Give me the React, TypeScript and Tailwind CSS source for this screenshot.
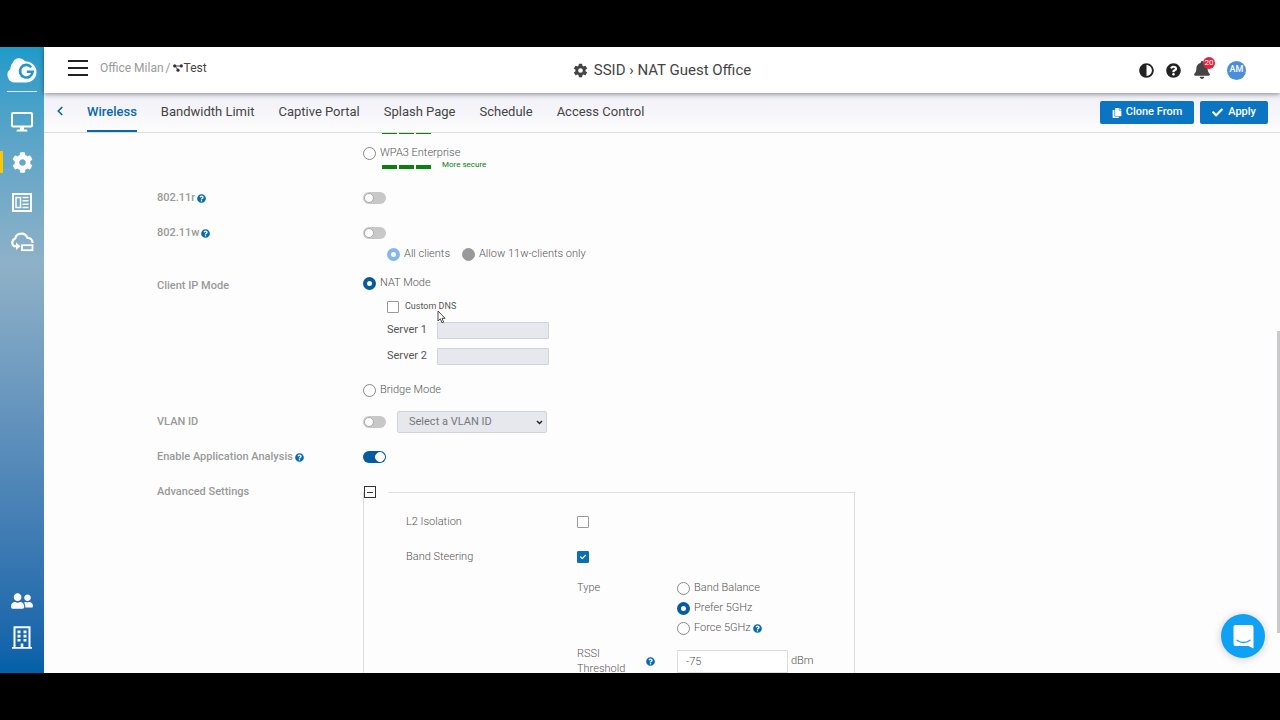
import { useState } from 'react';
import type { ReactNode } from 'react';
import { FaAdjust, FaBell, FaCheck, FaCog, FaCopy, FaQuestionCircle, FaUserFriends } from 'react-icons/fa';
import { IoSettingsSharp } from 'react-icons/io5';
import { ChevronLeft } from 'lucide-react';

const tabs = ['Wireless', 'Bandwidth Limit', 'Captive Portal', 'Splash Page', 'Schedule', 'Access Control'];

function CloudLogo() {
  return (
    <svg width="30" height="26" viewBox="0 0 30 26" aria-hidden="true">
      <path
        d="M8 25.500a7.500 7.500 0 0 1-4.600-13.400A7.300 7.300 0 0 1 5.600 6 7 7 0 0 1 18 4.200 11 11 0 0 1 29.500 15c0 6-4.500 10.500-10.500 10.500z"
        fill="#fff"
      />
      <path d="M24.200 10.200a6.300 6.300 0 1 0 1.400 4.600h-5.800" fill="none" stroke="#2596c6" strokeWidth="2.600" />
    </svg>
  );
}

function MonitorIcon() {
  return (
    <svg width="22" height="20" viewBox="0 0 22 20" fill="none" aria-hidden="true">
      <rect x="1" y="1" width="20" height="13.500" rx="1" stroke="#fff" strokeWidth="2" />
      <path d="M9 15h4v2.600h2.500q1 0 1 1.800h-11q0-1.800 1-1.800H9z" fill="#fff" />
    </svg>
  );
}

function ReportIcon() {
  return (
    <svg width="20" height="19" viewBox="0 0 20 19" fill="none" stroke="#fff" aria-hidden="true">
      <rect x="1" y="1" width="18" height="17" strokeWidth="2" />
      <rect x="4" y="4.500" width="4.500" height="10" strokeWidth="1.500" />
      <path d="M10.500 4.500h6M10.500 7.800h6M10.500 11.200h6M10.500 14.500h6" strokeWidth="1.500" />
    </svg>
  );
}

function CloudDeviceIcon() {
  return (
    <svg width="23" height="20" viewBox="0 0 23 20" fill="none" stroke="#fff" aria-hidden="true">
      <path d="M3 14.300A4.600 4.600 0 0 1 4.200 6.400 6.400 6.400 0 0 1 16.400 5.800 4.800 4.800 0 0 1 21.500 11" strokeWidth="2.200" />
      <path d="M2.500 14.200h3" strokeWidth="2.200" />
      <path d="M5 10.500l4.500 3.800L5 18z" fill="#fff" stroke="none" />
      <rect x="11" y="13.200" width="10.500" height="5" strokeWidth="1.800" />
    </svg>
  );
}

function OfficeIcon() {
  return (
    <svg width="20" height="23" viewBox="0 0 20 23" aria-hidden="true">
      <path d="M2.500 21V1.200h15V21" fill="none" stroke="#fff" strokeWidth="2" />
      <path d="M0 21h8.700v-3.500h2.600V21H20v1.800H0z" fill="#fff" />
      <path
        d="M5.500 4.500h3v2.700h-3zM11.500 4.500h3v2.700h-3zM5.500 8.700h3v2.700h-3zM11.500 8.700h3v2.700h-3zM5.500 12.900h3v2.700h-3zM11.500 12.900h3v2.700h-3z"
        fill="#fff"
      />
    </svg>
  );
}

function NetworkIcon() {
  return (
    <svg width="10" height="8" viewBox="0 0 10 8" aria-hidden="true">
      <path d="M2 2h6M2 2l3 4" stroke="#333" strokeWidth=".9" />
      <circle cx="1.700" cy="1.900" r="1.600" fill="#333" />
      <circle cx="8.300" cy="1.900" r="1.600" fill="#333" />
      <circle cx="5" cy="6.200" r="1.600" fill="#333" />
    </svg>
  );
}

function Help() {
  return <FaQuestionCircle size={9} className="shrink-0 text-[#0668b0]" title="Help" />;
}

function Strength() {
  return (
    <span className="flex gap-px">
      <span className="h-1 w-4 border-r border-[#fdfdfd] bg-[#0a800f]" />
      <span className="h-1 w-4 border-r border-[#fdfdfd] bg-[#0a800f]" />
      <span className="h-1 w-[15px] bg-[#0a800f]" />
    </span>
  );
}

type RadioProps = { name: string; label: string; defaultChecked?: boolean; disabled?: boolean };

function Radio({ name, label, defaultChecked, disabled }: RadioProps) {
  return (
    <label className="flex h-4 items-center gap-1 text-[#555]">
      <input
        type="radio"
        name={name}
        defaultChecked={defaultChecked}
        disabled={disabled}
        className="size-[13px] shrink-0 appearance-none rounded-full border border-[#888] bg-white checked:border-4 checked:border-[#065a9e] disabled:border-[#999] disabled:bg-[#999] disabled:checked:border-[#85b7ec] disabled:checked:bg-white"
      />
      {label}
    </label>
  );
}

function Check({ label, defaultChecked }: { label: string; defaultChecked?: boolean }) {
  return (
    <span className="grid size-3 shrink-0 place-items-center">
      <input
        type="checkbox"
        aria-label={label}
        defaultChecked={defaultChecked}
        className="peer col-start-1 row-start-1 size-3 appearance-none rounded-[1px] border border-[#999] bg-white checked:border-[#0b6fb8] checked:bg-[#0b6fb8]"
      />
      <FaCheck size={6} className="pointer-events-none col-start-1 row-start-1 hidden text-white peer-checked:block" />
    </span>
  );
}

function Toggle({ label, defaultChecked }: { label: string; defaultChecked?: boolean }) {
  return (
    <input
      type="checkbox"
      role="switch"
      aria-label={label}
      defaultChecked={defaultChecked}
      className="flex h-3 w-[23px] shrink-0 appearance-none items-center rounded-full bg-[#c8c8c8] px-px before:size-[10px] before:rounded-full before:border before:border-[#aaa] before:bg-white checked:justify-end checked:bg-[#065a9e] checked:before:border-white"
    />
  );
}

function Row({ label, help, className, children }: { label?: string; help?: boolean; className: string; children: ReactNode }) {
  return (
    <div className={`flex items-start ${className}`}>
      <div className="flex h-4 w-[206px] shrink-0 items-center gap-[2px] font-medium text-[#999]">
        {label}
        {help && <Help />}
      </div>
      <div className="min-w-0 flex-1">{children}</div>
    </div>
  );
}

function Sidebar() {
  return (
    <aside className="flex w-11 shrink-0 flex-col items-center bg-linear-to-b from-[#1b9bc9] via-[#8fb1c7] via-35% to-[#0360a8] pb-6 pt-[10px]">
      <a href="#home" aria-label="Home" className="flex h-[35px] w-[30px] flex-col justify-between border-b border-white/80">
        <CloudLogo />
      </a>
      <nav className="flex w-full flex-1 flex-col items-center pt-[10px]">
        <a href="#dashboard" aria-label="Dashboard" className="grid h-10 place-items-center"><MonitorIcon /></a>
        <a href="#configure" aria-label="Configure" className="grid h-10 w-full grid-cols-[3px_1fr_3px] items-center justify-items-center">
          <span className="h-[22px] w-[3px] bg-[#fdc800]" />
          <FaCog size={21} className="text-white" />
        </a>
        <a href="#reports" aria-label="Reports" className="grid h-10 place-items-center"><ReportIcon /></a>
        <a href="#devices" aria-label="Devices" className="grid h-10 place-items-center"><CloudDeviceIcon /></a>
        <a href="#users" aria-label="Users" className="mt-auto grid h-8 place-items-center"><FaUserFriends size={22} className="text-white" /></a>
        <a href="#organization" aria-label="Organization" className="grid h-8 place-items-end"><OfficeIcon /></a>
      </nav>
    </aside>
  );
}

function Header() {
  return (
    <header className="z-10 grid h-[46px] shrink-0 grid-cols-[1fr_auto_1fr] items-center bg-white px-6 shadow-[0_1px_5px_rgba(0,0,0,0.45)]">
      <div className="flex items-center gap-3 pb-1">
        <button aria-label="Menu" className="flex w-5 flex-col gap-[5px]">
          <span className="h-[2px] bg-[#222]" />
          <span className="h-[2px] bg-[#222]" />
          <span className="h-[2px] bg-[#222]" />
        </button>
        <div className="flex items-center gap-[2px] text-xs text-[#999]">
          <a href="#office">Office Milan</a>
          <span>/</span>
          <a href="#test" className="flex items-center gap-px text-[#444]"><NetworkIcon />Test</a>
        </div>
      </div>
      <h1 className="flex items-center gap-[6px] text-[15px] text-[#444]">
        <IoSettingsSharp size={15} />
        SSID › NAT Guest Office
      </h1>
      <div className="flex items-center justify-end gap-3 pr-[10px] text-[#222]">
        <button aria-label="Contrast"><FaAdjust size={15} /></button>
        <button aria-label="Help"><FaQuestionCircle size={15} /></button>
        <button aria-label="Notifications" className="relative">
          <FaBell size={18} className="text-[#444]" />
          <span className="absolute -right-1 -top-1 grid size-3 place-items-center rounded-full bg-[#e8213c] text-[8px] leading-none text-white">20</span>
        </button>
        <button className="ml-1 grid size-[19px] place-items-center rounded-full bg-[#4a8fdb] text-[9px] font-medium text-white">AM</button>
      </div>
    </header>
  );
}

function TabBar() {
  const [active, setActive] = useState('Wireless');
  return (
    <div className="flex h-10 shrink-0 items-stretch border-b border-[#ddd] bg-linear-to-b from-[#efeff7] to-[#fdfdfd] pl-[9px] pr-3">
      <button aria-label="Back" className="mr-5 pb-1 text-[#0668b0]"><ChevronLeft size={14} strokeWidth={3} /></button>
      <nav className="flex flex-1 gap-6">
        {tabs.map((tab) => (
          <button
            key={tab}
            onClick={() => setActive(tab)}
            className={tab === active ? 'border-b-2 border-[#0668b0] text-[13px] font-medium text-[#0668b0]' : 'border-b-2 border-transparent text-[13px] text-[#444]'}
          >
            {tab}
          </button>
        ))}
      </nav>
      <div className="flex items-center gap-[6px] text-[11px] font-medium text-white">
        <button className="flex h-[23px] items-center gap-1 rounded-[2px] bg-[#0b75c2] px-3"><FaCopy size={10} />Clone From</button>
        <button className="flex h-[23px] items-center gap-[5px] rounded-[2px] bg-[#0b75c2] px-3"><FaCheck size={11} />Apply</button>
      </div>
    </div>
  );
}

function AdvancedSettings() {
  return (
    <fieldset className="w-full max-w-[492px] border border-[#ddd] pl-[42px] text-[#555]">
      <legend className="-ml-[42px] pr-3">
        <button type="button" aria-label="Collapse" className="grid size-3 place-items-center border border-[#333] bg-white">
          <span className="h-px w-[6px] bg-[#333]" />
        </button>
      </legend>
      <div className="mt-4 flex h-4 items-center">
        <span className="w-[171px]">L2 Isolation</span>
        <Check label="L2 Isolation" />
      </div>
      <div className="mt-[19px] flex h-4 items-center">
        <span className="w-[171px]">Band Steering</span>
        <Check label="Band Steering" defaultChecked />
      </div>
      <div className="ml-[171px] mt-[15px] flex">
        <span className="w-[100px] leading-4">Type</span>
        <div className="flex flex-col gap-1">
          <Radio name="steering" label="Band Balance" />
          <Radio name="steering" label="Prefer 5GHz" defaultChecked />
          <span className="flex items-center gap-[2px]"><Radio name="steering" label="Force 5GHz" /><Help /></span>
        </div>
      </div>
      <div className="ml-[171px] mt-[10px] flex">
        <label htmlFor="rssi" className="w-[69px] leading-[15px]">RSSI<br />Threshold</label>
        <span className="flex h-[30px] w-[31px] shrink-0 items-center"><Help /></span>
        <span className="flex items-center gap-[3px] self-start pt-1">
          <input id="rssi" type="text" defaultValue="-75" className="h-[23px] w-[111px] border border-[#ddd] bg-white px-2" />
          dBm
        </span>
      </div>
    </fieldset>
  );
}

function WirelessForm() {
  return (
    <form className="min-h-0 flex-1 overflow-hidden pl-[113px] text-[11px] font-light">
      <Row className="-mt-[3px]">
        <div className="pl-[19px]"><Strength /></div>
        <div className="mt-[11px]"><Radio name="security" label="WPA3 Enterprise" /></div>
        <div className="flex items-end gap-[11px] pl-[19px]">
          <Strength />
          <span className="h-2 text-[8px] font-normal leading-[8px] text-[#0a800f]">More secure</span>
        </div>
      </Row>
      <Row label="802.11r" help className="mt-[21px]">
        <div className="flex h-4 items-center"><Toggle label="802.11r" /></div>
      </Row>
      <Row label="802.11w" help className="mt-[19px]">
        <div className="flex h-4 items-center"><Toggle label="802.11w" /></div>
        <div className="mt-[5px] flex gap-3 pl-6">
          <Radio name="pmf" label="All clients" defaultChecked disabled />
          <Radio name="pmf" label="Allow 11w-clients only" disabled />
        </div>
      </Row>
      <div className="mt-[13px] flex items-start">
        <div className="w-[206px] shrink-0 pt-[3px] font-medium leading-4 text-[#999]">Client IP Mode</div>
        <div className="min-w-0 flex-1">
          <Radio name="ipmode" label="NAT Mode" defaultChecked />
          <div className="flex flex-col pl-6 pt-2 font-normal text-[#555]">
            <div className="relative flex h-4 items-center gap-[6px] text-[9px]">
              <Check label="Custom DNS" />
              Custom DNS
              <svg className="absolute left-[50px] top-[11px]" width="9" height="14" viewBox="0 0 9 14" aria-hidden="true">
                <path d="M1 1v10l2.300-2.200L5 12.800l1.600-.700L5 8.300h3z" fill="#fff" stroke="#333" strokeWidth=".9" />
              </svg>
            </div>
            <label className="mt-[7px] flex items-center">
              <span className="w-[50px]">Server 1</span>
              <input type="text" disabled className="h-[17px] w-28 rounded-[1px] border border-[#d0d3d8] bg-[#e6e8ed] px-1" />
            </label>
            <label className="mt-[9px] flex items-center">
              <span className="w-[50px]">Server 2</span>
              <input type="text" disabled className="h-[17px] w-28 rounded-[1px] border border-[#d0d3d8] bg-[#e6e8ed] px-1" />
            </label>
          </div>
          <div className="mt-[17px]"><Radio name="ipmode" label="Bridge Mode" /></div>
        </div>
      </div>
      <Row label="VLAN ID" className="mt-4">
        <div className="flex h-4 items-center gap-[11px]">
          <Toggle label="VLAN ID" />
          <span className="grid items-center">
            <select aria-label="VLAN ID" disabled className="col-start-1 row-start-1 h-[22px] w-[150px] appearance-none rounded-[2px] border border-[#d0d3d8] bg-[#e6e8ed] px-[11px] font-normal text-[#777]">
              <option>Select a VLAN ID</option>
            </select>
            <svg className="col-start-1 row-start-1 mr-1 justify-self-end" width="7" height="5" viewBox="0 0 7 5" fill="none" aria-hidden="true">
              <path d="M1 1l2.500 2.500L6 1" stroke="#222" strokeWidth="1.500" />
            </svg>
          </span>
        </div>
      </Row>
      <Row label="Enable Application Analysis" help className="mt-[19px]">
        <div className="flex h-4 items-center"><Toggle label="Enable Application Analysis" defaultChecked /></div>
      </Row>
      <Row label="Advanced Settings" className="mt-[19px]">
        <div className="pt-[2px]"><AdvancedSettings /></div>
      </Row>
    </form>
  );
}

export default function App() {
  return (
    <div className="flex h-screen flex-col overflow-hidden bg-black py-[47px] font-['Roboto',sans-serif]">
      <div className="relative flex min-h-0 flex-1 overflow-hidden bg-[#fdfdfd]">
        <Sidebar />
        <main className="flex min-w-0 flex-1 flex-col">
          <Header />
          <TabBar />
          <WirelessForm />
        </main>
        <div className="absolute bottom-10 right-0 h-[302px] w-[3px] bg-[#c9c9cd]" />
        <button aria-label="Open chat" className="absolute bottom-[15px] right-[15px] grid size-11 place-items-center rounded-full bg-[#0fa1f3] shadow-[0_1px_8px_rgba(0,0,0,0.2)]">
          <svg width="21" height="25" viewBox="0 0 21 25" aria-hidden="true">
            <path d="M2.500 1h16a2 2 0 0 1 2 2v21.500L15.500 22h-13a2 2 0 0 1-2-2V3a2 2 0 0 1 2-2z" fill="#fff" />
            <path d="M4 16.200q6.500 4.600 13 0" fill="none" stroke="#0fa1f3" strokeWidth="1.300" strokeLinecap="round" />
          </svg>
        </button>
      </div>
    </div>
  );
}
